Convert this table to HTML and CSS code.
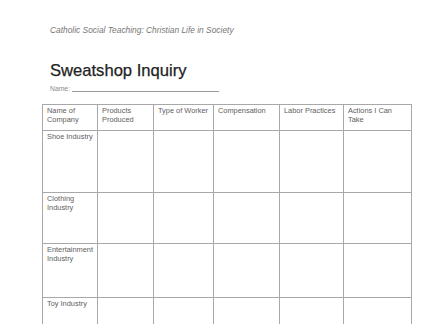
FILE: index.html
```html
<!DOCTYPE html>
<html>
<head>
<meta charset="utf-8">
<link rel="stylesheet" href="styles.css">
</head>
<body>
<div class="page">
  <p class="course">Catholic Social Teaching: Christian Life in Society</p>
  <h1 class="title">Sweatshop Inquiry</h1>
  <div class="name-row"><span class="name-label">Name:</span><span class="name-line"></span></div>
  <table class="grid">
    <colgroup>
      <col class="c1"><col class="c2"><col class="c3"><col class="c4"><col class="c5"><col class="c6">
    </colgroup>
    <tr class="head">
      <td>Name of<br>Company</td>
      <td>Products<br>Produced</td>
      <td>Type of Worker</td>
      <td>Compensation</td>
      <td>Labor Practices</td>
      <td>Actions I Can<br>Take</td>
    </tr>
    <tr class="r1"><td>Shoe Industry</td><td></td><td></td><td></td><td></td><td></td></tr>
    <tr class="r2"><td>Clothing<br>Industry</td><td></td><td></td><td></td><td></td><td></td></tr>
    <tr class="r3"><td>Entertainment<br>Industry</td><td></td><td></td><td></td><td></td><td></td></tr>
    <tr class="r4"><td>Toy Industry</td><td></td><td></td><td></td><td></td><td></td></tr>
  </table>
</div>
</body>
</html>
```

FILE: styles.css
```css
html, body {
  margin: 0;
  padding: 0;
  background: #ffffff;
}
body {
  font-family: "Liberation Sans", Arial, sans-serif;
  overflow: hidden;
}
.page {
  width: 428px;
  height: 324px;
  overflow: hidden;
}
.course {
  margin: 25px 0 0 50px;
  font-size: 8.4px;
  line-height: 10px;
  font-style: italic;
  color: #777777;
}
.title {
  margin: 27px 0 0 50px;
  font-size: 16.6px;
  line-height: 18px;
  font-weight: normal;
  color: #222222;
  -webkit-text-stroke: 0.25px #222222;
}
.name-row {
  display: flex;
  align-items: flex-end;
  margin: 4px 0 0 50px;
  height: 9px;
}
.name-label {
  font-size: 6.8px;
  line-height: 9px;
  color: #8a8a8a;
}
.name-line {
  width: 147px;
  margin-left: 2px;
  margin-bottom: 1px;
  border-bottom: 1px solid #9a9a9a;
}
.grid {
  margin: 11px 0 0 42px;
  border-collapse: collapse;
  table-layout: fixed;
  width: 369px;
}
.c1 { width: 55px; }
.c2 { width: 56px; }
.c3 { width: 60px; }
.c4 { width: 66px; }
.c5 { width: 64px; }
.c6 { width: 68px; }
.grid td {
  border: 1px solid #a8a8a8;
  vertical-align: top;
  padding: 1px 3px 0 4px;
  font-size: 7.4px;
  line-height: 9px;
  color: #606060;
  overflow: hidden;
  white-space: nowrap;
}
.head td { height: 24px; }
.r1 td { height: 60px; }
.r2 td { height: 49px; }
.r3 td { height: 52px; }
.r4 td { height: 40px; }
```
